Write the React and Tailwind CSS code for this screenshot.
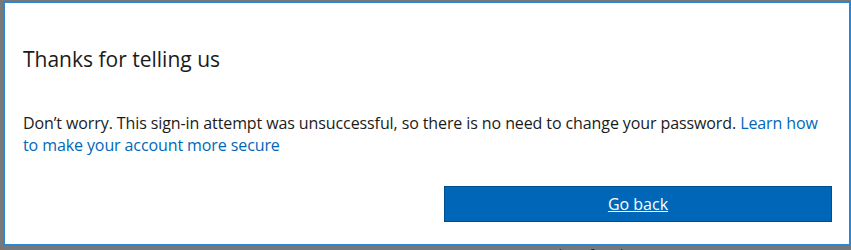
import React from 'react';

const App = () => {
  return (
    <div className="w-[851px] h-[250px] bg-[#787878] overflow-hidden pt-px pl-[3px] font-['Open_Sans',sans-serif]">
      <div className="w-[848px] h-[245px] bg-white border-2 border-[#2a87d8] pl-[18px] pr-[17px] flex flex-col">
        <h1 className="mt-[42px] text-[21px] leading-[28px] text-[#1b1b1b]">Thanks for telling us</h1>
        <p className="mt-[39px] text-[16px] leading-[22px] tracking-[-0.1px] text-[#1b1b1b]">
          Don’t worry. This sign-in attempt was unsuccessful, so there is no need to change your password.{' '}
          <a href="#" className="text-[#0067b8]">Learn how to make your account more secure</a>
        </p>
        <div className="mt-[30px] flex justify-end">
          <button className="w-[388px] h-[36px] bg-[#0067b8] border border-[#00508f] text-white text-[16px] underline">
            Go back
          </button>
        </div>
      </div>
      <div className="h-[4px] overflow-hidden flex text-[15px] leading-[15px] text-[#2b2b2b]">
        <span className="ml-[202px] mt-[1px]">Session activity</span>
        <span className="ml-[222px] mt-[1px]">Look unfamiliar?</span>
      </div>
    </div>
  );
};

export default App;
